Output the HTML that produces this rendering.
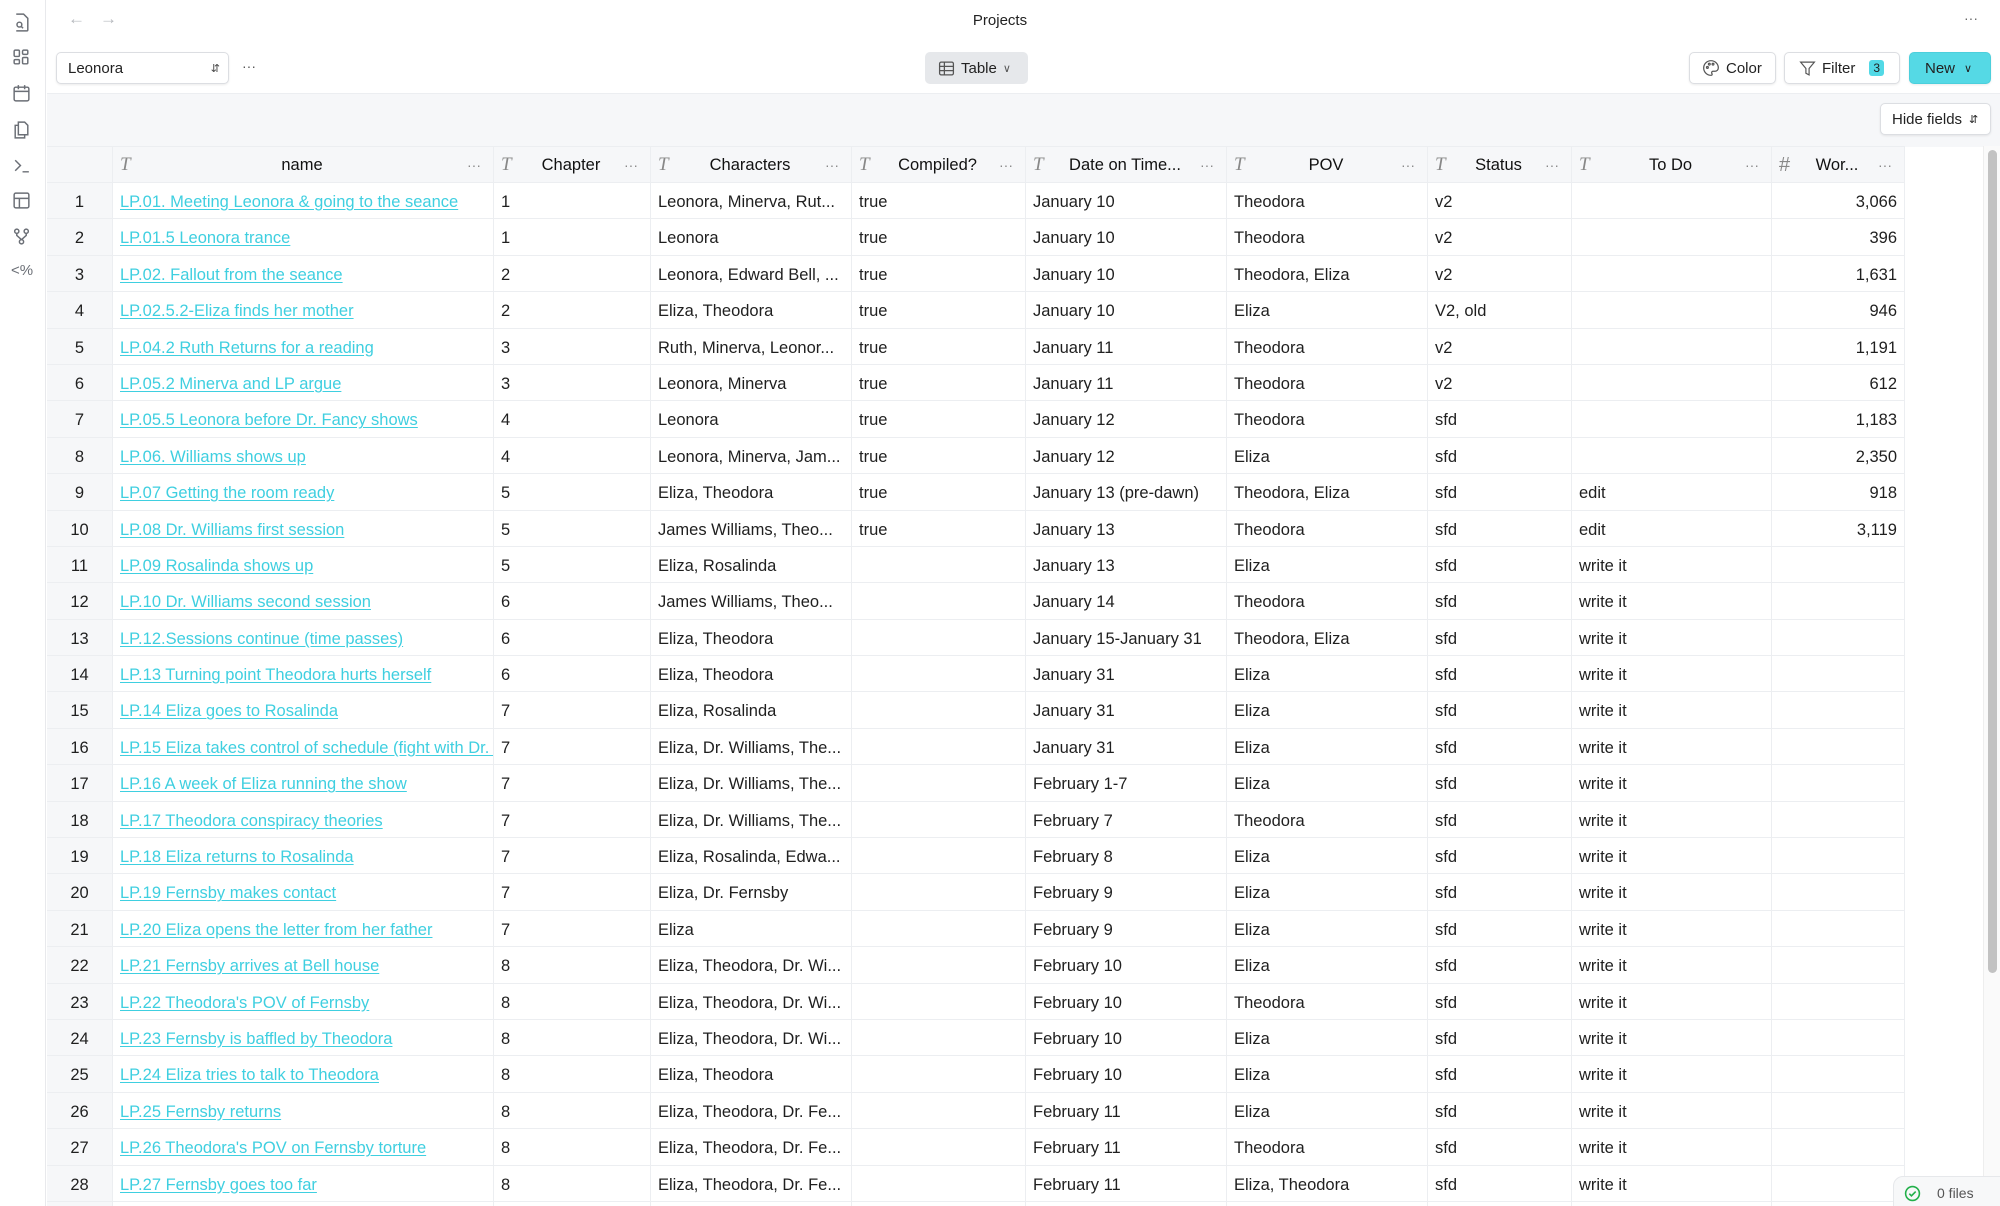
<!DOCTYPE html>
<html><head><meta charset="utf-8"><style>
*{box-sizing:border-box;margin:0;padding:0}
html,body{width:2000px;height:1206px;overflow:hidden}
body{background:#fff;font-family:"Liberation Sans",sans-serif;font-size:16.5px;color:#1f1f1f}
#wrap{position:relative;width:2000px;height:1206px;overflow:hidden}
.side{position:absolute;left:0;top:0;width:46px;height:1206px;border-right:1px solid #e8e9ec;background:#fff}
.side svg{position:absolute;left:11px;width:21px;height:21px;stroke:#6b6f76;fill:none;stroke-width:1.4}
.title{position:absolute;left:0;width:2000px;top:12px;text-align:center;font-size:15px;color:#222}
.nav{position:absolute;top:9px;font-size:17px;color:#b5b8bd}
.btn{position:absolute;height:32px;border:1px solid #dcdee2;border-radius:5px;background:#fff;box-shadow:0 1px 2px rgba(0,0,0,.08);display:flex;align-items:center;font-size:15px;color:#222}
.gray{position:absolute;left:47px;top:93px;width:1953px;height:54px;background:#f6f7f9;border-top:1px solid #eceef1}
.tbl{position:absolute;left:47px;top:146px}
.row{display:flex;height:36.4px;border-bottom:1px solid #eceef1}
.row>div{border-right:1px solid #eceef1;padding:0 7px;white-space:nowrap;overflow:hidden;line-height:38px;flex:none}
.hd{background:#f6f7f9;height:37px;border-top:1px solid #eceef1}
.hd>div{display:flex;align-items:center;line-height:36px}
.hd .t{font-family:"Liberation Serif",serif;font-style:italic;color:#888;font-size:19px;width:22px;flex:none}
.hd .l{flex:1;text-align:center;font-size:16.5px;color:#111}
.hd .d{color:#888;font-size:14px;flex:none;width:24px;text-align:center}
.c0{width:66px;text-align:center}.c1{width:381px}.c2{width:157px}.c3{width:201px}.c4{width:174px}.c5{width:201px}.c6{width:201px}.c7{width:144px}.c8{width:200px}.c9{width:133px;text-align:right}
.row>.c0{background:#f6f7f9;padding:0}
a{color:#3fcfe0;text-decoration:underline;text-underline-offset:2px}
</style></head><body><div id="wrap">
<div class="side">
<svg style="top:12px" viewBox="0 0 20 20"><path d="M5 2h7l4 4v11a1 1 0 0 1-1 1H5"/><circle cx="8" cy="12" r="2.3"/><path d="M9.7 13.7l1.8 1.8"/></svg>
<svg style="top:47px" viewBox="0 0 20 20"><rect x="3" y="3" width="5" height="6" rx="1"/><rect x="11" y="3" width="5" height="4" rx="1"/><rect x="3" y="12" width="5" height="4" rx="1"/><rect x="11" y="10" width="5" height="6" rx="1"/></svg>
<svg style="top:83px" viewBox="0 0 20 20"><rect x="3" y="4" width="14" height="13" rx="1.5"/><path d="M3 8h14M7 2v4M13 2v4"/></svg>
<svg style="top:119px" viewBox="0 0 20 20"><path d="M7 3h6l3 3v9H7z"/><path d="M7 6H4v12h9v-3"/></svg>
<svg style="top:155px" viewBox="0 0 20 20"><path d="M4 5l5 5-5 5M11 16h6"/></svg>
<svg style="top:190px" viewBox="0 0 20 20"><rect x="3" y="3" width="14" height="14" rx="1.5"/><path d="M3 8h14M8 8v9"/></svg>
<svg style="top:226px" viewBox="0 0 20 20"><circle cx="5.5" cy="5" r="2"/><circle cx="14.5" cy="5" r="2"/><circle cx="10" cy="15" r="2"/><path d="M5.5 7v2l4.5 4M14.5 7v2L10 13"/></svg>
<div style="position:absolute;top:262px;left:11px;font-size:15px;color:#6b6f76">&lt;%</div>
</div>
<div class="nav" style="left:68px">&#8592;</div><div class="nav" style="left:100px">&#8594;</div>
<div class="title">Projects</div>
<div style="position:absolute;right:22px;top:10px;color:#666;font-size:14px">···</div>
<div class="btn" style="left:56px;top:52px;width:173px;padding-left:11px">Leonora<span style="position:absolute;right:8px;font-size:11px;color:#444">&#8693;</span></div>
<div style="position:absolute;left:242px;top:58px;color:#555;font-size:14px">···</div>
<div class="btn" style="left:925px;top:52px;width:103px;background:#e6e8eb;border-color:#e6e8eb;box-shadow:none;padding-left:12px"><svg width="17" height="17" viewBox="0 0 16 16" fill="none" stroke="#555" stroke-width="1.2"><rect x="1.5" y="2" width="13" height="12" rx="1.5"/><path d="M1.5 6h13M1.5 10h13M6 2v12"/></svg><span style="margin-left:6px">Table</span><span style="margin-left:6px;font-size:11px;color:#555">&#8744;</span></div>
<div class="btn" style="left:1689px;top:52px;width:87px;padding-left:12px"><svg width="18" height="18" viewBox="0 0 16 16" fill="none" stroke="#555" stroke-width="1.1"><path d="M8 1.5a6.5 6.5 0 1 0 0 13c1 0 1.3-.8.8-1.6-.6-.9 0-2 1-2h1.7a3 3 0 0 0 3-3C14.5 4.3 11.6 1.5 8 1.5z"/><circle cx="4.8" cy="7.5" r=".8"/><circle cx="6.5" cy="4.6" r=".8"/><circle cx="9.8" cy="4.6" r=".8"/></svg><span style="margin-left:6px">Color</span></div>
<div class="btn" style="left:1784px;top:52px;width:116px;padding-left:14px"><svg width="17" height="17" viewBox="0 0 16 16" fill="none" stroke="#555" stroke-width="1.1"><path d="M1.5 2h13L9.5 8v6l-3-1.5V8z"/></svg><span style="margin-left:6px">Filter</span><span style="margin-left:14px;background:#52d9e6;border-radius:3px;font-size:12px;padding:1px 4px">3</span></div>
<div class="btn" style="left:1909px;top:52px;width:82px;background:#55d9e5;border-color:#4ccfdc;padding-left:15px">New<span style="margin-left:9px;font-size:11px">&#8744;</span></div>
<div class="gray"></div>
<div class="btn" style="left:1880px;top:103px;width:111px;padding-left:11px;font-size:15px">Hide fields<span style="margin-left:7px;font-size:11px">&#8693;</span></div>
<div style="position:absolute;left:1983px;top:146px;width:17px;height:1060px;background:#fafafa;border-left:1px solid #eee"></div>
<div style="position:absolute;left:1988px;top:150px;width:9px;height:823px;background:#c2c2c2;border-radius:5px"></div>
<div class="tbl">
<div class="row hd"><div class="c0"></div><div class="c1"><span class="t">T</span><span class="l">name</span><span class="d">···</span></div><div class="c2"><span class="t">T</span><span class="l">Chapter</span><span class="d">···</span></div><div class="c3"><span class="t">T</span><span class="l">Characters</span><span class="d">···</span></div><div class="c4"><span class="t">T</span><span class="l">Compiled?</span><span class="d">···</span></div><div class="c5"><span class="t">T</span><span class="l">Date on Time...</span><span class="d">···</span></div><div class="c6"><span class="t">T</span><span class="l">POV</span><span class="d">···</span></div><div class="c7"><span class="t">T</span><span class="l">Status</span><span class="d">···</span></div><div class="c8"><span class="t">T</span><span class="l">To Do</span><span class="d">···</span></div><div class="c9" style="text-align:left"><span class="t" style="font-family:'Liberation Sans';font-style:normal;font-size:20px">#</span><span class="l">Wor...</span><span class="d">···</span></div></div>
<div class="row"><div class="c0">1</div><div class="c1"><a>LP.01. Meeting Leonora &amp; going to the seance</a></div><div class="c2">1</div><div class="c3">Leonora, Minerva, Rut...</div><div class="c4">true</div><div class="c5">January 10</div><div class="c6">Theodora</div><div class="c7">v2</div><div class="c8"></div><div class="c9">3,066</div></div>
<div class="row"><div class="c0">2</div><div class="c1"><a>LP.01.5 Leonora trance</a></div><div class="c2">1</div><div class="c3">Leonora</div><div class="c4">true</div><div class="c5">January 10</div><div class="c6">Theodora</div><div class="c7">v2</div><div class="c8"></div><div class="c9">396</div></div>
<div class="row"><div class="c0">3</div><div class="c1"><a>LP.02. Fallout from the seance</a></div><div class="c2">2</div><div class="c3">Leonora, Edward Bell, ...</div><div class="c4">true</div><div class="c5">January 10</div><div class="c6">Theodora, Eliza</div><div class="c7">v2</div><div class="c8"></div><div class="c9">1,631</div></div>
<div class="row"><div class="c0">4</div><div class="c1"><a>LP.02.5.2-Eliza finds her mother</a></div><div class="c2">2</div><div class="c3">Eliza, Theodora</div><div class="c4">true</div><div class="c5">January 10</div><div class="c6">Eliza</div><div class="c7">V2, old</div><div class="c8"></div><div class="c9">946</div></div>
<div class="row"><div class="c0">5</div><div class="c1"><a>LP.04.2 Ruth Returns for a reading</a></div><div class="c2">3</div><div class="c3">Ruth, Minerva, Leonor...</div><div class="c4">true</div><div class="c5">January 11</div><div class="c6">Theodora</div><div class="c7">v2</div><div class="c8"></div><div class="c9">1,191</div></div>
<div class="row"><div class="c0">6</div><div class="c1"><a>LP.05.2 Minerva and LP argue</a></div><div class="c2">3</div><div class="c3">Leonora, Minerva</div><div class="c4">true</div><div class="c5">January 11</div><div class="c6">Theodora</div><div class="c7">v2</div><div class="c8"></div><div class="c9">612</div></div>
<div class="row"><div class="c0">7</div><div class="c1"><a>LP.05.5 Leonora before Dr. Fancy shows</a></div><div class="c2">4</div><div class="c3">Leonora</div><div class="c4">true</div><div class="c5">January 12</div><div class="c6">Theodora</div><div class="c7">sfd</div><div class="c8"></div><div class="c9">1,183</div></div>
<div class="row"><div class="c0">8</div><div class="c1"><a>LP.06. Williams shows up</a></div><div class="c2">4</div><div class="c3">Leonora, Minerva, Jam...</div><div class="c4">true</div><div class="c5">January 12</div><div class="c6">Eliza</div><div class="c7">sfd</div><div class="c8"></div><div class="c9">2,350</div></div>
<div class="row"><div class="c0">9</div><div class="c1"><a>LP.07 Getting the room ready</a></div><div class="c2">5</div><div class="c3">Eliza, Theodora</div><div class="c4">true</div><div class="c5">January 13 (pre-dawn)</div><div class="c6">Theodora, Eliza</div><div class="c7">sfd</div><div class="c8">edit</div><div class="c9">918</div></div>
<div class="row"><div class="c0">10</div><div class="c1"><a>LP.08 Dr. Williams first session</a></div><div class="c2">5</div><div class="c3">James Williams, Theo...</div><div class="c4">true</div><div class="c5">January 13</div><div class="c6">Theodora</div><div class="c7">sfd</div><div class="c8">edit</div><div class="c9">3,119</div></div>
<div class="row"><div class="c0">11</div><div class="c1"><a>LP.09 Rosalinda shows up</a></div><div class="c2">5</div><div class="c3">Eliza, Rosalinda</div><div class="c4"></div><div class="c5">January 13</div><div class="c6">Eliza</div><div class="c7">sfd</div><div class="c8">write it</div><div class="c9"></div></div>
<div class="row"><div class="c0">12</div><div class="c1"><a>LP.10 Dr. Williams second session</a></div><div class="c2">6</div><div class="c3">James Williams, Theo...</div><div class="c4"></div><div class="c5">January 14</div><div class="c6">Theodora</div><div class="c7">sfd</div><div class="c8">write it</div><div class="c9"></div></div>
<div class="row"><div class="c0">13</div><div class="c1"><a>LP.12.Sessions continue (time passes)</a></div><div class="c2">6</div><div class="c3">Eliza, Theodora</div><div class="c4"></div><div class="c5">January 15-January 31</div><div class="c6">Theodora, Eliza</div><div class="c7">sfd</div><div class="c8">write it</div><div class="c9"></div></div>
<div class="row"><div class="c0">14</div><div class="c1"><a>LP.13 Turning point Theodora hurts herself</a></div><div class="c2">6</div><div class="c3">Eliza, Theodora</div><div class="c4"></div><div class="c5">January 31</div><div class="c6">Eliza</div><div class="c7">sfd</div><div class="c8">write it</div><div class="c9"></div></div>
<div class="row"><div class="c0">15</div><div class="c1"><a>LP.14 Eliza goes to Rosalinda</a></div><div class="c2">7</div><div class="c3">Eliza, Rosalinda</div><div class="c4"></div><div class="c5">January 31</div><div class="c6">Eliza</div><div class="c7">sfd</div><div class="c8">write it</div><div class="c9"></div></div>
<div class="row"><div class="c0">16</div><div class="c1"><a>LP.15 Eliza takes control of schedule (fight with Dr. Williams)</a></div><div class="c2">7</div><div class="c3">Eliza, Dr. Williams, The...</div><div class="c4"></div><div class="c5">January 31</div><div class="c6">Eliza</div><div class="c7">sfd</div><div class="c8">write it</div><div class="c9"></div></div>
<div class="row"><div class="c0">17</div><div class="c1"><a>LP.16 A week of Eliza running the show</a></div><div class="c2">7</div><div class="c3">Eliza, Dr. Williams, The...</div><div class="c4"></div><div class="c5">February 1-7</div><div class="c6">Eliza</div><div class="c7">sfd</div><div class="c8">write it</div><div class="c9"></div></div>
<div class="row"><div class="c0">18</div><div class="c1"><a>LP.17 Theodora conspiracy theories</a></div><div class="c2">7</div><div class="c3">Eliza, Dr. Williams, The...</div><div class="c4"></div><div class="c5">February 7</div><div class="c6">Theodora</div><div class="c7">sfd</div><div class="c8">write it</div><div class="c9"></div></div>
<div class="row"><div class="c0">19</div><div class="c1"><a>LP.18 Eliza returns to Rosalinda</a></div><div class="c2">7</div><div class="c3">Eliza, Rosalinda, Edwa...</div><div class="c4"></div><div class="c5">February 8</div><div class="c6">Eliza</div><div class="c7">sfd</div><div class="c8">write it</div><div class="c9"></div></div>
<div class="row"><div class="c0">20</div><div class="c1"><a>LP.19 Fernsby makes contact</a></div><div class="c2">7</div><div class="c3">Eliza, Dr. Fernsby</div><div class="c4"></div><div class="c5">February 9</div><div class="c6">Eliza</div><div class="c7">sfd</div><div class="c8">write it</div><div class="c9"></div></div>
<div class="row"><div class="c0">21</div><div class="c1"><a>LP.20 Eliza opens the letter from her father</a></div><div class="c2">7</div><div class="c3">Eliza</div><div class="c4"></div><div class="c5">February 9</div><div class="c6">Eliza</div><div class="c7">sfd</div><div class="c8">write it</div><div class="c9"></div></div>
<div class="row"><div class="c0">22</div><div class="c1"><a>LP.21 Fernsby arrives at Bell house</a></div><div class="c2">8</div><div class="c3">Eliza, Theodora, Dr. Wi...</div><div class="c4"></div><div class="c5">February 10</div><div class="c6">Eliza</div><div class="c7">sfd</div><div class="c8">write it</div><div class="c9"></div></div>
<div class="row"><div class="c0">23</div><div class="c1"><a>LP.22 Theodora's POV of Fernsby</a></div><div class="c2">8</div><div class="c3">Eliza, Theodora, Dr. Wi...</div><div class="c4"></div><div class="c5">February 10</div><div class="c6">Theodora</div><div class="c7">sfd</div><div class="c8">write it</div><div class="c9"></div></div>
<div class="row"><div class="c0">24</div><div class="c1"><a>LP.23 Fernsby is baffled by Theodora</a></div><div class="c2">8</div><div class="c3">Eliza, Theodora, Dr. Wi...</div><div class="c4"></div><div class="c5">February 10</div><div class="c6">Eliza</div><div class="c7">sfd</div><div class="c8">write it</div><div class="c9"></div></div>
<div class="row"><div class="c0">25</div><div class="c1"><a>LP.24 Eliza tries to talk to Theodora</a></div><div class="c2">8</div><div class="c3">Eliza, Theodora</div><div class="c4"></div><div class="c5">February 10</div><div class="c6">Eliza</div><div class="c7">sfd</div><div class="c8">write it</div><div class="c9"></div></div>
<div class="row"><div class="c0">26</div><div class="c1"><a>LP.25 Fernsby returns</a></div><div class="c2">8</div><div class="c3">Eliza, Theodora, Dr. Fe...</div><div class="c4"></div><div class="c5">February 11</div><div class="c6">Eliza</div><div class="c7">sfd</div><div class="c8">write it</div><div class="c9"></div></div>
<div class="row"><div class="c0">27</div><div class="c1"><a>LP.26 Theodora's POV on Fernsby torture</a></div><div class="c2">8</div><div class="c3">Eliza, Theodora, Dr. Fe...</div><div class="c4"></div><div class="c5">February 11</div><div class="c6">Theodora</div><div class="c7">sfd</div><div class="c8">write it</div><div class="c9"></div></div>
<div class="row"><div class="c0">28</div><div class="c1"><a>LP.27 Fernsby goes too far</a></div><div class="c2">8</div><div class="c3">Eliza, Theodora, Dr. Fe...</div><div class="c4"></div><div class="c5">February 11</div><div class="c6">Eliza, Theodora</div><div class="c7">sfd</div><div class="c8">write it</div><div class="c9"></div></div>
<div class="row"><div class="c0"></div><div class="c1"></div><div class="c2"></div><div class="c3"></div><div class="c4"></div><div class="c5"></div><div class="c6"></div><div class="c7"></div><div class="c8"></div><div class="c9"></div></div>
</div>
<div style="position:absolute;left:1893px;top:1176px;width:120px;height:34px;background:#f7f8f9;border:1px solid #e6e8eb;border-radius:10px 0 0 0;display:flex;align-items:center;padding-left:10px;font-size:14px;color:#555">
<svg width="17" height="17" viewBox="0 0 16 16" fill="none" stroke="#22b04a" stroke-width="1.5"><circle cx="8" cy="8" r="6.5"/><path d="M5 8.2l2 2 4-4"/></svg><span style="margin-left:16px">0 files</span></div>
</div></body></html>
